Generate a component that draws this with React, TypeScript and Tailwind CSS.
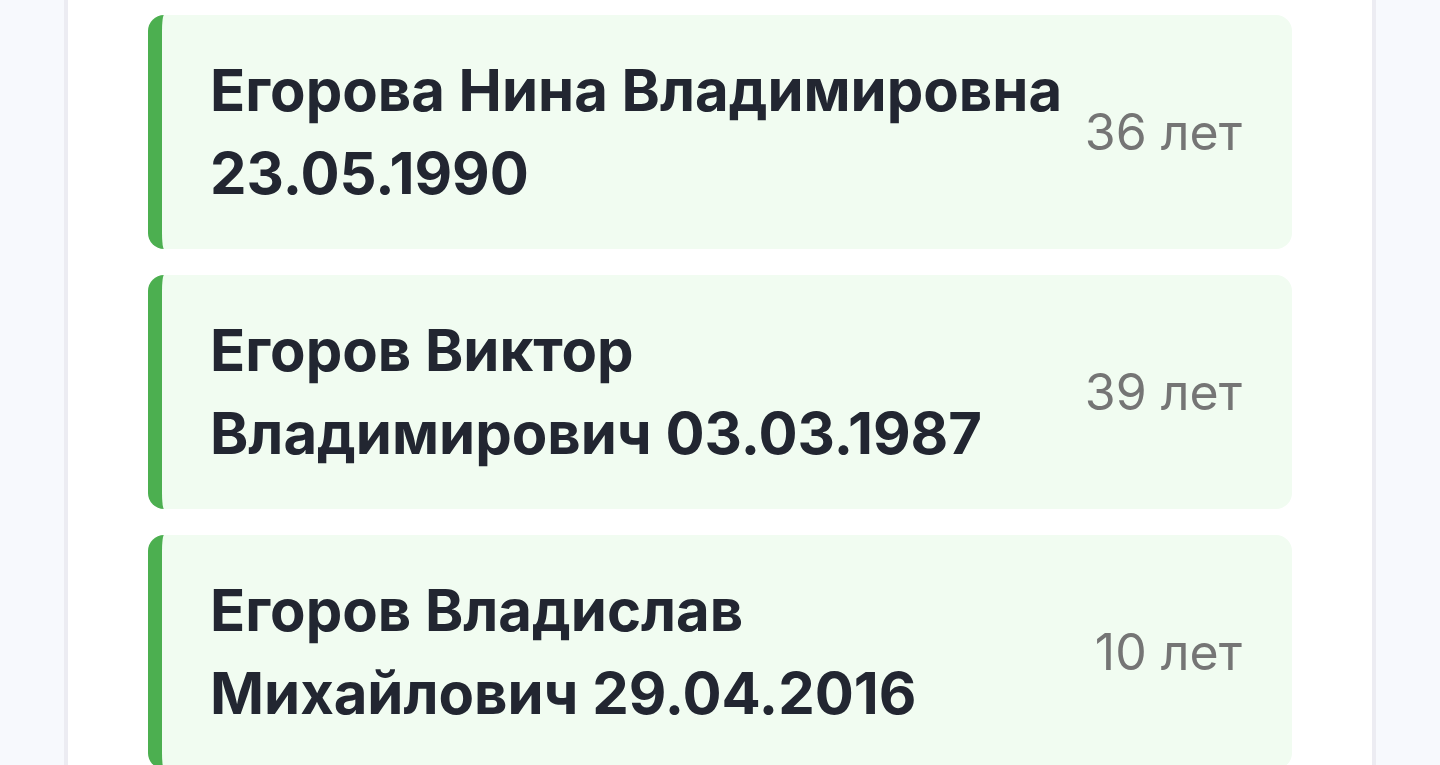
const people = [
  { name: "Егорова Нина Владимировна", birth: "23.05.1990", age: "36 лет" },
  { name: "Егоров Виктор Владимирович", birth: "03.03.1987", age: "39 лет" },
  { name: "Егоров Владислав Михайлович", birth: "29.04.2016", age: "10 лет" },
]

export default function App() {
  return (
    <div className="min-h-screen w-full bg-[#f7f9fd] font-['Inter','Noto_Sans',sans-serif]">
      <div className="ml-[64px] w-[1312px] min-h-screen border-x-4 border-[#ececf2] bg-white px-[80px] pt-[15px]">
        <div className="flex flex-col gap-[26px]">
          {people.map((p) => (
            <div
              key={p.name}
              className="flex items-center justify-between rounded-[16px] border-l-[14px] border-[#4caf50] bg-[#f1fcf1] py-[34px] pl-[48px] pr-[50px]"
            >
              <div className="w-[868px] shrink-0 text-[58px] font-bold leading-[83px] text-[#222631]">
                {p.name} {p.birth}
              </div>
              <div className="shrink-0 whitespace-nowrap text-[50px] font-normal leading-none text-[#757575]">
                {p.age}
              </div>
            </div>
          ))}
        </div>
      </div>
    </div>
  )
}
